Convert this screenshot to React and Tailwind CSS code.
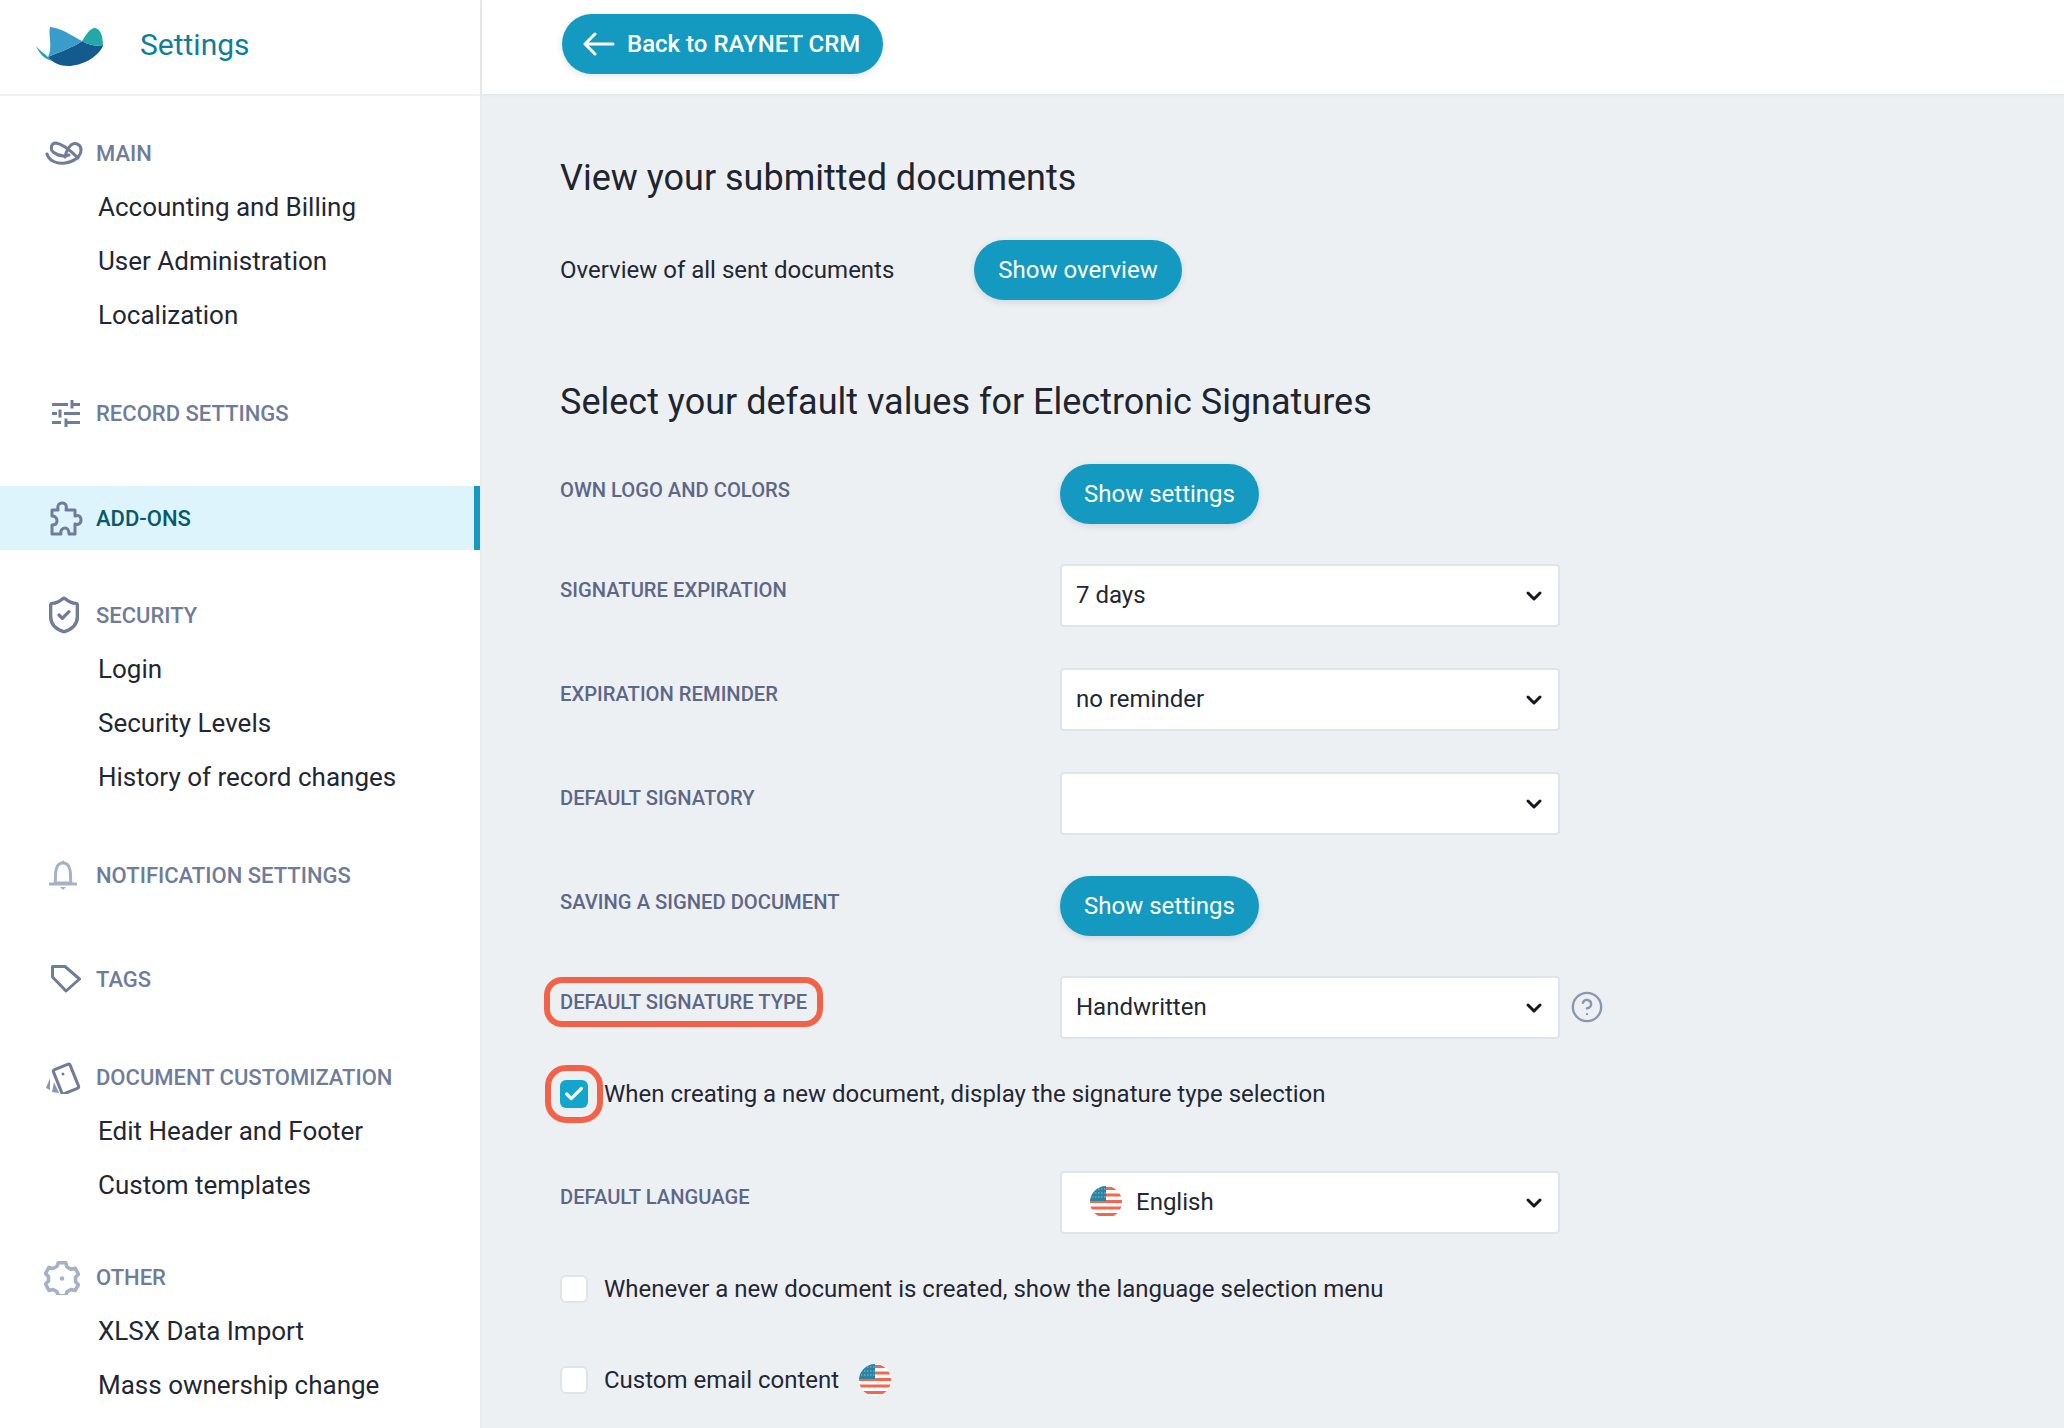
import { ChevronDown, ShieldCheck, CircleHelp, Check } from "lucide-react";

const Logo = () => (
  <svg width="68" height="40" viewBox="0 0 68 40" className="shrink-0">
    <path d="M0 19C4 24 8 26 12 30L16 34C8 32 3 26 0 19Z" fill="#21a6ab" />
    <path d="M12 30C26 24 38 20 46 14C52 18 60 19 67 19C62 30 46 39 32 39C24 39 17 36 12 30Z" fill="#135a8f" />
    <path d="M14 0C26 1 36 9 46 14C38 20 26 24 12 30C17 20 12 8 14 0Z" fill="#3a9ccb" />
    <path d="M46 14C50 8 54 1 59 1C65 2 67 10 67 19C60 19 52 18 46 14Z" fill="#22a8a9" />
  </svg>
);

const MainIcon = () => (
  <svg width="38" height="24" viewBox="0 0 38 24" fill="none" stroke="#6f7c9a" strokeWidth="3" strokeLinecap="round" className="ml-[1px]">
    <path d="M2 13C4 20 12 23 20 22C28 21 36 16 36 9C36 3 30 1 26 4C23 7 21 11 20 16" />
    <path d="M33 17C26 10 18 3 11 2C6 2 5 8 8 11C12 14 18 16 24 14" />
  </svg>
);

const SlidersIcon = () => (
  <svg width="28" height="27" viewBox="0 0 28 27" fill="none" stroke="#6f7c9a" strokeWidth="3" className="ml-[8px]">
    <path d="M0 4.500H16M20 0V8.500M20 4.500H28M0 13.500H5M8 9.500V17.500M12 13.500H28M0 22.500H9M14 18.500V27M14 22.500H28" />
  </svg>
);

const PuzzleIcon = () => (
  <svg width="33" height="35" viewBox="0 0 33 35" fill="none" stroke="#6f7c9a" strokeWidth="3" strokeLinejoin="round" className="ml-[2px]">
    <path d="M2 9H8C7 3 10 2 12 2C16 2 17 5 16 9H25V15C30 13 31 17 31 19C31 23 28 24 25 23V33H19C19 29 17 27 15 27C13 27 10 29 11 33H2V24C6 24 7 22 7 20C7 18 6 15 2 15Z" />
  </svg>
);

const BellIcon = () => (
  <svg width="28" height="30" viewBox="0 0 28 30" fill="none" stroke="#a7b1c6" strokeWidth="3" strokeLinejoin="round" className="ml-[5px]">
    <path d="M6 23C7 19 6 14 7 10C8 5 11 3 14 3C17 3 20 5 21 10C22 14 21 19 22 23Z" />
    <path d="M1 24H27" strokeLinecap="round" />
    <circle cx="14" cy="2" r="1.500" fill="#a7b1c6" stroke="none" />
    <path d="M11 27H17L14 30Z" fill="#a7b1c6" stroke="none" />
  </svg>
);

const TagIcon = () => (
  <svg width="30" height="28" viewBox="0 0 30 28" fill="none" stroke="#6f7c9a" strokeWidth="3" strokeLinejoin="round" className="ml-[7px]">
    <path d="M1.500 1.500H14L28.500 14L15 26L1.500 12Z" />
  </svg>
);

const DocIcon = () => (
  <svg width="36" height="34" viewBox="0 0 36 34" fill="none" className="ml-[2px]">
    <rect x="11" y="6" width="18" height="26" rx="2" stroke="#6f7c9a" strokeWidth="3" transform="rotate(-22 20 19)" />
    <circle cx="17" cy="14" r="1.500" fill="#6f7c9a" />
    <path d="M4 18L0 28L4 30ZM8 22L6 32L13 33Z" fill="#8b97b1" />
  </svg>
);

const GearIcon = () => (
  <svg width="36" height="36" viewBox="0 0 24 24" fill="none" stroke="#a7b1c6" strokeWidth="2.400" strokeLinejoin="round">
    <path d="M9.500 2.500h5l.8 2.800 2.600 1.500 2.800-.7 2.300 4-2 2 0 3 2 2-2.300 3.900-2.800-.7-2.600 1.500-.8 2.700h-5l-.8-2.700-2.600-1.500-2.800.7L1 16.600l2-2v-3l-2-2 2.300-4 2.800.7 2.600-1.500z" />
    <circle cx="12" cy="13" r="1.500" fill="#a7b1c6" stroke="none" />
  </svg>
);

const BackArrow = () => (
  <svg width="32" height="24" viewBox="0 0 32 24" fill="none" stroke="white" strokeWidth="3" strokeLinecap="round" strokeLinejoin="round">
    <path d="M30 12H2M12 2L2 12L12 22" />
  </svg>
);

const Flag = () => (
  <svg width="32" height="32" viewBox="0 0 32 32" className="shrink-0">
    <g style={{ clipPath: "circle(16px at 16px 16px)" }}>
      <rect width="32" height="32" fill="#fff" />
      <path d="M16 2.500H32M16 9H32M0 15.500H32M0 22H32M0 28.500H32" stroke="#f4664e" strokeWidth="3.200" />
      <rect width="16" height="15" fill="#2a83a3" />
      <path d="M2 3H16M2 7H16M2 11H16" stroke="#8cc0d3" strokeWidth="1" strokeDasharray="1.500 1.500" />
    </g>
  </svg>
);

function Heading({ icon, children, className = "" }) {
  return (
    <div className={`flex items-center h-[54px] ${className}`}>
      <span className="w-[96px] pl-[44px] flex items-center justify-start">{icon}</span>
      <span className="text-[22px] font-medium text-[#6f7c9a] uppercase">{children}</span>
    </div>
  );
}

function Item({ children }) {
  return <div className="h-[54px] pl-[98px] flex items-center text-[26px] text-[#232733]">{children}</div>;
}

function Pill({ children, className = "" }) {
  return (
    <button className={`h-[60px] rounded-full bg-[#1499c1] text-white text-[24px] shadow-[0_2px_6px_rgba(40,60,90,0.15)] flex items-center justify-center ${className}`}>
      {children}
    </button>
  );
}

function Select({ children }) {
  return (
    <div className="w-[500px] h-[63px] bg-white border-2 border-[#dfe3ea] rounded-[4px] flex items-center justify-between pl-[14px] pr-[12px] text-[24px] text-[#232733]">
      <span className="flex items-center pb-[1px]">{children}</span>
      <ChevronDown size={24} strokeWidth={3} className="text-[#14171f] mt-[1px]" />
    </div>
  );
}

function Row({ label, children, className = "" }) {
  return (
    <div className={`flex items-start ${className}`}>
      <div className="w-[500px] pt-[14px] text-[20.200px] leading-[24px] font-medium text-[#5d6787] uppercase">{label}</div>
      {children}
    </div>
  );
}

function CheckRow({ checked, children, className = "" }) {
  return (
    <div className={`flex items-center text-[24px] text-[#232733] ${className}`}>
      {checked ? (
        <span className="w-[28px] h-[28px] rounded-[6px] bg-[#14a5cc] flex items-center justify-center outline-[6px] outline-offset-[9px] outline-[#f46149] mr-[16px]">
          <Check size={22} strokeWidth={3.500} className="text-white" />
        </span>
      ) : (
        <span className="w-[28px] h-[28px] rounded-[6px] bg-white border-2 border-[#dfe3ea] mr-[16px]" />
      )}
      {children}
    </div>
  );
}

export default function App() {
  return (
    <div className="flex h-[1428px] overflow-hidden bg-[#edf0f3] font-['Roboto',sans-serif]">
      <aside className="w-[482px] shrink-0 bg-white border-r-2 border-[#e8ecf1]">
        <div className="h-[96px] border-b-2 border-[#eef1f5] flex items-center pl-[36px]">
          <Logo />
          <span className="ml-[36px] text-[30px] text-[#0d7f98] pb-[6px]">Settings</span>
        </div>
        <Heading icon={<MainIcon />} className="mt-[30px]">Main</Heading>
        <Item>Accounting and Billing</Item>
        <Item>User Administration</Item>
        <Item>Localization</Item>
        <Heading icon={<SlidersIcon />} className="mt-[44px]">Record Settings</Heading>
        <div className="mt-[46px] h-[64px] bg-[#def4fd] border-r-[6px] border-[#1499c1] flex items-center">
          <span className="w-[96px] pl-[48px] flex"><PuzzleIcon /></span>
          <span className="text-[22px] font-medium text-[#07596b]">ADD-ONS</span>
        </div>
        <Heading icon={<ShieldCheck size={40} strokeWidth={2} className="text-[#6f7c9a]" />} className="mt-[38px]">Security</Heading>
        <Item>Login</Item>
        <Item>Security Levels</Item>
        <Item>History of record changes</Item>
        <Heading icon={<BellIcon />} className="mt-[44px]">Notification Settings</Heading>
        <Heading icon={<TagIcon />} className="mt-[50px]">Tags</Heading>
        <Heading icon={<DocIcon />} className="mt-[44px]">Document Customization</Heading>
        <Item>Edit Header and Footer</Item>
        <Item>Custom templates</Item>
        <Heading icon={<GearIcon />} className="mt-[38px]">Other</Heading>
        <Item>XLSX Data Import</Item>
        <Item>Mass ownership change</Item>
      </aside>
      <main className="flex-1 min-w-0">
        <div className="h-[94px] bg-white shadow-[0_1px_3px_rgba(40,60,90,0.08)] pl-[80px] pt-[14px]">
          <Pill className="w-[321px] font-medium justify-start pl-[21px] gap-[12px]">
            <BackArrow />
            Back to RAYNET CRM
          </Pill>
        </div>
        <div className="pl-[78px]">
          <h2 className="mt-[61px] h-[46px] leading-[46px] text-[36px] text-[#20242e]">View your submitted documents</h2>
          <div className="mt-[39px] flex items-center">
            <span className="w-[414px] text-[24px] text-[#232733]">Overview of all sent documents</span>
            <Pill className="w-[208px]">Show overview</Pill>
          </div>
          <h2 className="mt-[79px] h-[46px] leading-[46px] text-[36px] text-[#20242e]">Select your default values for Electronic Signatures</h2>
          <Row label="Own logo and colors" className="mt-[39px]"><Pill className="w-[199px]">Show settings</Pill></Row>
          <Row label="Signature expiration" className="mt-[40px]"><Select>7 days</Select></Row>
          <Row label="Expiration reminder" className="mt-[41px]"><Select>no reminder</Select></Row>
          <Row label="Default signatory" className="mt-[41px]"><Select>{"\u00a0"}</Select></Row>
          <Row label="Saving a signed document" className="mt-[41px]"><Pill className="w-[199px]">Show settings</Pill></Row>
          <div className="mt-[40px] flex items-start">
            <div className="w-[500px] pt-[14px] text-[20.200px] leading-[24px] font-medium text-[#5d6787] uppercase">
              <span className="inline-block rounded-[12px] px-[10px] -mx-[10px] py-[7px] -my-[7px] outline-[6px] outline-[#f46149]">Default signature type</span>
            </div>
            <Select>Handwritten</Select>
            <CircleHelp size={34} strokeWidth={1.700} className="ml-[10px] mt-[14px] text-[#8b97b1]" />
          </div>
          <CheckRow checked className="mt-[39px] h-[32px]">When creating a new document, display the signature type selection</CheckRow>
          <Row label="Default language" className="mt-[61px]">
            <Select>
              <span className="ml-[14px] mr-[14px] flex"><Flag /></span>
              English
            </Select>
          </Row>
          <CheckRow className="mt-[39px] h-[32px]">Whenever a new document is created, show the language selection menu</CheckRow>
          <CheckRow className="mt-[59px] h-[32px]">
            Custom email content
            <span className="ml-[20px] flex"><Flag /></span>
          </CheckRow>
        </div>
      </main>
    </div>
  );
}
